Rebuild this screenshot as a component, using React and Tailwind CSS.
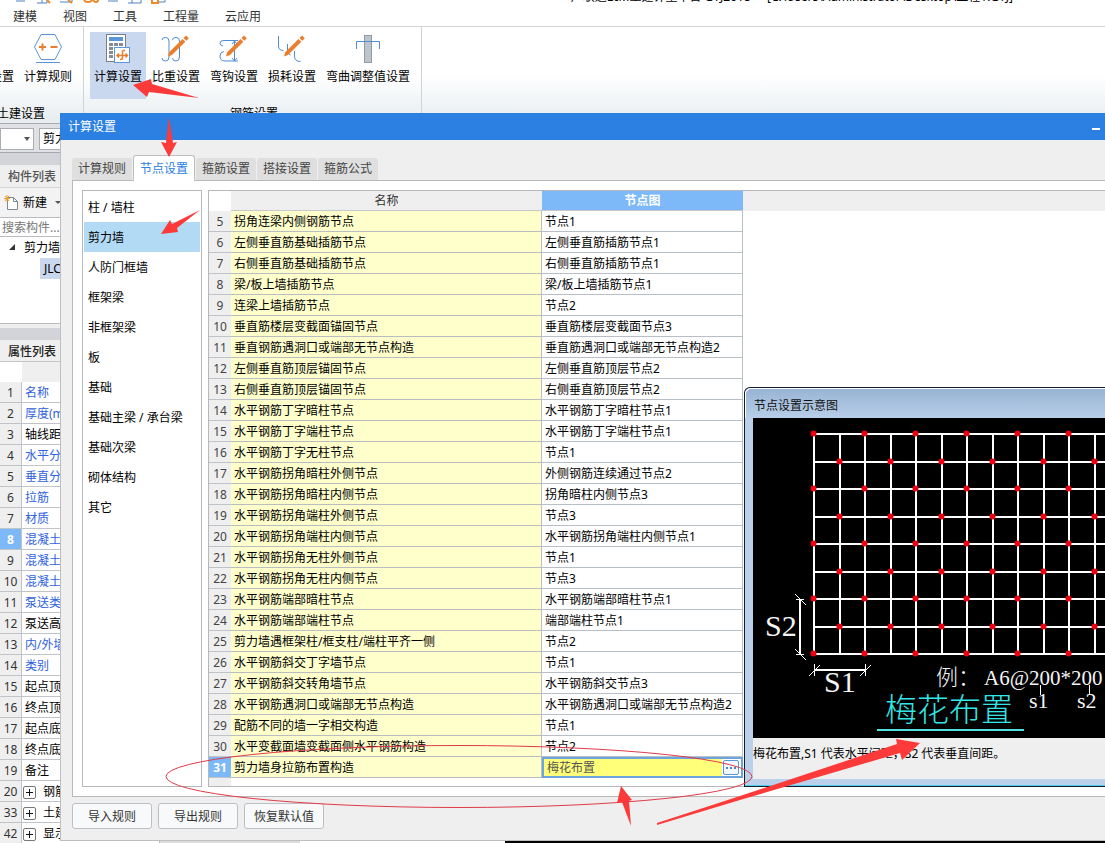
import { useState } from 'react';

const menus = ['建模', '视图', '工具', '工程量', '云应用'];

const tabs = ['计算规则', '节点设置', '箍筋设置', '搭接设置', '箍筋公式'];

const components = [
  '柱 / 墙柱', '剪力墙', '人防门框墙', '框架梁', '非框架梁', '板',
  '基础', '基础主梁 / 承台梁', '基础次梁', '砌体结构', '其它',
];

const properties = [
  { no: 1, name: '名称', link: true },
  { no: 2, name: '厚度(mm)', link: true },
  { no: 3, name: '轴线距' },
  { no: 4, name: '水平分', link: true },
  { no: 5, name: '垂直分', link: true },
  { no: 6, name: '拉筋', link: true },
  { no: 7, name: '材质', link: true },
  { no: 8, name: '混凝土', link: true, active: true },
  { no: 9, name: '混凝土', link: true },
  { no: 10, name: '混凝土', link: true },
  { no: 11, name: '泵送类', link: true },
  { no: 12, name: '泵送高' },
  { no: 13, name: '内/外墙', link: true },
  { no: 14, name: '类别', link: true },
  { no: 15, name: '起点顶' },
  { no: 16, name: '终点顶' },
  { no: 17, name: '起点底' },
  { no: 18, name: '终点底' },
  { no: 19, name: '备注' },
  { no: 20, name: '钢筋', group: true },
  { no: 33, name: '土建', group: true },
  { no: 42, name: '显示', group: true },
];

const nodes = [
  ['拐角连梁内侧钢筋节点', '节点1'],
  ['左侧垂直筋基础插筋节点', '左侧垂直筋插筋节点1'],
  ['右侧垂直筋基础插筋节点', '右侧垂直筋插筋节点1'],
  ['梁/板上墙插筋节点', '梁/板上墙插筋节点1'],
  ['连梁上墙插筋节点', '节点2'],
  ['垂直筋楼层变截面锚固节点', '垂直筋楼层变截面节点3'],
  ['垂直钢筋遇洞口或端部无节点构造', '垂直筋遇洞口或端部无节点构造2'],
  ['左侧垂直筋顶层锚固节点', '左侧垂直筋顶层节点2'],
  ['右侧垂直筋顶层锚固节点', '右侧垂直筋顶层节点2'],
  ['水平钢筋丁字暗柱节点', '水平钢筋丁字暗柱节点1'],
  ['水平钢筋丁字端柱节点', '水平钢筋丁字端柱节点1'],
  ['水平钢筋丁字无柱节点', '节点1'],
  ['水平钢筋拐角暗柱外侧节点', '外侧钢筋连续通过节点2'],
  ['水平钢筋拐角暗柱内侧节点', '拐角暗柱内侧节点3'],
  ['水平钢筋拐角端柱外侧节点', '节点3'],
  ['水平钢筋拐角端柱内侧节点', '水平钢筋拐角端柱内侧节点1'],
  ['水平钢筋拐角无柱外侧节点', '节点1'],
  ['水平钢筋拐角无柱内侧节点', '节点3'],
  ['水平钢筋端部暗柱节点', '水平钢筋端部暗柱节点1'],
  ['水平钢筋端部端柱节点', '端部端柱节点1'],
  ['剪力墙遇框架柱/框支柱/端柱平齐一侧', '节点2'],
  ['水平钢筋斜交丁字墙节点', '节点1'],
  ['水平钢筋斜交转角墙节点', '水平钢筋斜交节点3'],
  ['水平钢筋遇洞口或端部无节点构造', '水平钢筋遇洞口或端部无节点构造2'],
  ['配筋不同的墙一字相交构造', '节点1'],
  ['水平变截面墙变截面侧水平钢筋构造', '节点2'],
  ['剪力墙身拉筋布置构造', '梅花布置'],
];

function Pencil() {
  return (
    <g fill="#ea7e2c">
      <path d="M7 23.500l1.200-4.200L21.500 6l2.800 2.800L11 22z" />
      <path d="M22.500 5l2.500-2.500 2.800 2.800-2.500 2.500z" />
    </g>
  );
}

function RulesIcon() {
  return (
    <svg className="h-[30px] w-[30px]" viewBox="0 0 30 30" fill="none">
      <path d="M8 1.500h14l6.500 12.500-6.500 12.500H8L1.500 14z" stroke="#5b97d6" />
      <path d="M3 29.500h24" stroke="#5b97d6" />
      <path d="M6 14h7M9.500 10.500v7M17.500 14h7" stroke="#ea7e2c" strokeWidth="2" />
    </svg>
  );
}

function CalcIcon() {
  return (
    <svg className="h-[30px] w-[30px]" viewBox="0 0 30 30" fill="none">
      <rect x="3.500" y="1.500" width="19" height="27" fill="#fff" stroke="#777f88" />
      <rect x="6" y="4" width="14" height="4" fill="#5b97d6" />
      <path d="M6 11.500h14M6 15.500h14M6 19.500h14M6 23.500h14" stroke="#858c94" strokeWidth="3" strokeDasharray="4 1" />
      <rect x="11.500" y="14.500" width="15" height="15" fill="#fff" stroke="#5b97d6" />
      <path d="M14 22.500h10.500M19.500 17.500v7.500q0 1.500-2.500 1.500M22 17.500h-2.500M16 20.500l-2 2 2 2M22.500 20.500l2 2-2 2" stroke="#ea7e2c" strokeWidth="1.500" />
    </svg>
  );
}

function WeightIcon() {
  return (
    <svg className="h-[30px] w-[30px]" viewBox="0 0 30 30" fill="none">
      <path d="M1 7q0-2.500 3.500-2.500Q8 4.500 8 8v16q0 4-3.500 4Q1 28 1 25M11.500 7q0-2.500 3.500-2.500 3.500 0 3.500 3.500v16q0 4-3.500 4-3.500 0-3.500-3" stroke="#4d8fd1" />
      <Pencil />
    </svg>
  );
}

function HookIcon() {
  return (
    <svg className="h-[30px] w-[30px]" viewBox="0 0 30 30" fill="none">
      <path d="M4 13q-3-.5-3-3 0-2.500 4-2.500h14M5 18.500q-4 .5-4 4.500 0 5 5 5h13M15.500 8v20M13 11l2.500-3 2.500 3M13 25l2.500 3 2.500-3" stroke="#4d8fd1" />
      <Pencil />
    </svg>
  );
}

function LossIcon() {
  return (
    <svg className="h-[30px] w-[30px]" viewBox="0 0 30 30" fill="none">
      <path d="M1.500 3v10q0 4.500 5 4.500M10.500 11v7q0 3 3 4M17.500 18v5q0 5.500 6 5.500" stroke="#4d8fd1" />
      <Pencil />
    </svg>
  );
}

function BendIcon() {
  return (
    <svg className="h-[30px] w-[30px]" viewBox="0 0 30 30" fill="none">
      <rect x="11.500" y="2.500" width="7" height="27" fill="#bcc5cb" stroke="#929ba2" />
      <path d="M3.500 16V8.500h23V16" stroke="#4d8fd1" />
    </svg>
  );
}

const ribbonTools = [
  { label: '计算设置', icon: <CalcIcon />, active: true },
  { label: '比重设置', icon: <WeightIcon /> },
  { label: '弯钩设置', icon: <HookIcon /> },
  { label: '损耗设置', icon: <LossIcon /> },
  { label: '弯曲调整值设置', icon: <BendIcon /> },
];

function RibbonButton({ label, icon, active }) {
  return (
    <button
      type="button"
      className={`flex h-[67px] shrink-0 flex-col items-center gap-1 px-1 pt-px whitespace-nowrap ${active ? 'bg-[#c9d8ee]' : ''}`}
    >
      {icon}
      <span className="leading-5">{label}</span>
    </button>
  );
}

function Ribbon() {
  return (
    <header>
      <div className="flex h-1 items-end justify-between overflow-hidden">
        <svg className="ml-4 h-1 w-[152px]" viewBox="0 0 152 4" fill="none">
          <path d="M0 1h9M21 3h10V0M26 0v3M44 2h12V0M92 1h10M112 3h13V0M116 0v3M143 2h6V0" stroke="#4d83c4" />
          <path d="M31 0l3 3M52 0l4 3M68 0q1 2 4 2t4-2M77 0q1 2 3 2t2-2M136 0v3h6V0" stroke="#ea8b2c" strokeWidth="2" />
        </svg>
        <span className="mr-[92px] leading-[14px] whitespace-pre">
          {'广联达BIM土建计量平台 GTJ2018  -  [C:\\Users\\Administrator\\Desktop\\工程1.GTJ]'}
        </span>
      </div>
      <nav className="flex h-[23px] items-center gap-[26px] border-b border-[#d5d5d5] pt-1 pl-[13px] text-[#333]">
        {menus.map((menu) => (
          <button key={menu} type="button" className="leading-[18px]">{menu}</button>
        ))}
      </nav>
      <div className="flex h-[97px] border-b border-[#a9adb3] bg-linear-to-b from-white from-50% to-[#e6ecef]">
        <div className="flex w-[84px] flex-col overflow-hidden border-r border-[#d0d3d6] pt-[5px]">
          <div className="flex justify-end gap-0.5 pr-[7px]">
            <RibbonButton
              label="计算设置"
              icon={
                <svg className="h-[30px] w-[30px]" viewBox="0 0 30 30" fill="none">
                  <path d="M12 15h11.500v14H12" stroke="#5b97d6" fill="#eef4fb" />
                </svg>
              }
            />
            <RibbonButton label="计算规则" icon={<RulesIcon />} />
          </div>
          <div className="flex justify-end pt-[5px] pr-[38px] leading-5 whitespace-nowrap">土建设置</div>
        </div>
        <div className="border-r border-[#d0d3d6] pt-[5px] pr-[7px] pl-1.5">
          <div className="flex gap-0.5">
            {ribbonTools.map((tool) => (
              <RibbonButton key={tool.label} {...tool} />
            ))}
          </div>
          <div className="pt-[5px] pl-1 text-center leading-5">钢筋设置</div>
        </div>
      </div>
    </header>
  );
}

function Sidebar() {
  return (
    <aside className="w-40 border-r border-[#b5b8bd] bg-white">
      <div className="flex h-[29px] items-center gap-[5px] border-b border-[#a5a8ad] bg-[#dfe1e5] pt-px">
        <div className="relative w-[34px]">
          <select aria-label="楼层" className="block h-[22px] w-full appearance-none border border-[#aaadb2] bg-white" />
          <span className="pointer-events-none absolute top-[9px] right-1 border-x-[3px] border-t-4 border-x-transparent border-t-[#555]" />
        </div>
        <select aria-label="构件类型" className="h-[22px] w-28 appearance-none border border-[#aaadb2] bg-white pl-[3px]">
          <option>剪力墙</option>
        </select>
      </div>
      <div className="h-3 bg-[#d3d4da]" />
      <h2 className="h-[23px] border-b border-[#d5d5d5] bg-[#efefef] pl-2 leading-[23px] font-medium text-[#555]">构件列表</h2>
      <div className="flex h-[29px] items-center bg-[#f3f3f3] pl-1">
        <button type="button" className="flex items-center">
          <svg className="mr-[5px] h-4 w-[14px]" viewBox="0 0 14 16" fill="none">
            <path d="M3.500 2.500h6l4 4v8h-10z" fill="#fff" stroke="#7a8794" />
            <path d="M9.500 2.500v4h4" stroke="#7a8794" />
            <path d="M3 0v7M0 3.500h6M1 1l4 5M5 1L1 6" stroke="#f0a030" />
          </svg>
          新建
          <span className="ml-2 border-x-[3px] border-t-[3px] border-x-transparent border-t-[#555]" />
        </button>
      </div>
      <input
        aria-label="搜索构件"
        placeholder="搜索构件..."
        className="block h-5 w-full border-y border-[#b9bcc0] pl-0.5 placeholder:text-[#777]"
      />
      <div className="h-[87px] border-b border-[#b9bcc0]">
        <div className="flex h-[21px] items-center gap-2 pl-[9px]">
          <svg className="h-[7px] w-[7px]" viewBox="0 0 7 7">
            <path d="M6 0v6H0z" fill="#333" />
          </svg>
          剪力墙
        </div>
        <div className="ml-10 h-[21px] bg-[#c9d8ee] pl-1 leading-[21px]">JLC</div>
      </div>
      <div className="h-1 bg-[#efefef]" />
      <div className="h-3 bg-[#d3d4da]" />
      <h2 className="h-[22px] border-b border-[#c5c5c5] bg-[#efefef] pl-2 leading-[23px] font-medium text-[#222]">属性列表</h2>
      <table className="w-full table-fixed border-separate border-spacing-0">
        <colgroup>
          <col className="w-[22px]" />
          <col />
        </colgroup>
        <thead>
          <tr className="h-5">
            <td />
            <td className="bg-[#efefef]" />
          </tr>
        </thead>
        <tbody>
          {properties.map((row) => (
            <tr key={row.no} className="h-[21px]">
              <th
                className={`border-r border-b border-[#c0c4c8] px-0 pt-0.5 pb-0 leading-[18px] ${
                  row.active ? 'bg-[#7db8f8] font-bold text-white' : 'bg-[#efefef] font-normal text-[#333]'
                }`}
              >
                {row.no}
              </th>
              <td
                className={`border-b border-[#c0c4c8] pt-0.5 pr-0 pb-0 leading-[18px] whitespace-nowrap ${
                  row.group ? 'pl-px' : 'pl-[3px]'
                } ${row.link ? 'text-[#2f62e0]' : ''}`}
              >
                {row.group ? (
                  <span className="flex items-center gap-[7px]">
                    <button type="button" aria-label="展开" className="flex size-[13px] items-center justify-center rounded-[2px] border border-[#777]">
                      <svg className="size-[9px]" viewBox="0 0 9 9">
                        <path d="M1 4.500h7M4.500 1v7" stroke="#111" />
                      </svg>
                    </button>
                    {row.name}
                  </span>
                ) : (
                  row.name
                )}
              </td>
            </tr>
          ))}
        </tbody>
      </table>
    </aside>
  );
}

function NodeTable() {
  return (
    <div className="min-w-0 flex-1 border-y border-l border-[#b4b8bc]">
      <table className="w-full table-fixed border-separate border-spacing-0">
        <colgroup>
          <col className="w-[22px]" />
          <col className="w-[311px]" />
          <col className="w-[201px]" />
          <col />
        </colgroup>
        <thead>
          <tr className="h-5">
            <td />
            <th className="border-b border-[#c5c9cd] bg-[#efefef] p-0 pt-px leading-[18px] font-normal text-[#333]">名称</th>
            <th className="border-b border-[#c5c9cd] bg-[#7db8f8] p-0 pt-px leading-[18px] font-bold text-white">节点图</th>
            <td className="bg-[#efefef]" />
          </tr>
        </thead>
        <tbody>
          {nodes.map(([name, node], i) => {
            const active = i === nodes.length - 1;
            return (
              <tr key={name} className="h-[21px]">
                <th
                  className={`border-b border-[#c0c4c8] px-0 pt-0.5 pb-0 leading-[18px] ${
                    active ? 'bg-[#7db8f8] font-bold text-white' : 'bg-[#efefef] font-normal text-[#444]'
                  }`}
                >
                  {i + 5}
                </th>
                <td className="border-r border-b border-[#b9bfc0] bg-[#ffffcc] pt-0.5 pr-0 pb-0 pl-[3px] leading-[18px]">{name}</td>
                {active ? (
                  <td className="border-2 border-[#6ea4dc] bg-[#ffff7a] p-0 leading-[17px] text-[#555]">
                    <div className="flex items-center justify-between pl-[3px]">
                      {node}
                      <span className="flex h-[17px] bg-white pl-px">
                        <button
                          type="button"
                          aria-label="更多"
                          className="mr-0.5 flex h-[15px] w-4 items-center justify-center self-center rounded-[2px] border border-[#5b97d6] bg-[#f3f8ff]"
                        >
                          <svg className="h-0.5 w-[10px]" viewBox="0 0 10 2">
                            <path d="M0 1h10" stroke="#4a86cc" strokeWidth="2" strokeDasharray="2" />
                          </svg>
                        </button>
                      </span>
                    </div>
                  </td>
                ) : (
                  <td className="border-r border-b border-[#b9bfc8] pt-0.5 pr-0 pb-0 pl-[3px] leading-[18px]">{node}</td>
                )}
                <td />
              </tr>
            );
          })}
        </tbody>
      </table>
      <div className="h-2 w-[22px] bg-[#efefef]" />
    </div>
  );
}

// Wall grid with tie bars on alternating crossings
const gridX = Array.from({ length: 40 }, (_, i) => 61 + Math.ceil(i * 25.5));
const gridY = [16, 44, 71, 99, 126, 154, 181, 209, 236];

function NodeDiagram() {
  return (
    <svg className="block h-80 w-full bg-black font-['Liberation_Serif','Noto_Sans_CJK_SC',serif]">
      <g stroke="#fff" strokeWidth="2">
        {gridX.map((x) => (
          <line key={x} x1={x} y1="16" x2={x} y2="236" />
        ))}
        {gridY.map((y) => (
          <line key={y} x1="61" y1={y} x2="100%" y2={y} />
        ))}
      </g>
      <g fill="#ee0010">
        {gridY.map((y, row) =>
          gridX
            .filter((_, col) => col % 2 === row % 2)
            .map((x) => <circle key={`${x}-${y}`} cx={x - 0.5} cy={y - 0.5} r="3" />)
        )}
      </g>
      <g stroke="#fff" fill="none">
        <path d="M47 181v56M61 252h52" strokeWidth="2" />
        <path d="M43 181.500h8M43 236.500h8M61.500 246v12M112.500 246v12M42 176l11 11M42 231l11 11M56 258l11-11M107 258l11-11" />
        <path d="M287.500 267v10M336.500 267v10" />
      </g>
      <g fill="#f4f4f4" className="font-light">
        <text x="12" y="218" fontSize="30">S2</text>
        <text x="71" y="274" fontSize="30">S1</text>
        <text x="183" y="267" fontSize="22">例：</text>
        <text x="231" y="267" fontSize="21">A6@200*200</text>
        <text x="276" y="290" fontSize="22">s1</text>
        <text x="324" y="290" fontSize="22">s2</text>
      </g>
      <text x="132" y="303" fontSize="32" fill="#35e6e6" className="font-light">梅花布置</text>
      <path d="M124 312h147" stroke="#4fe0e0" strokeWidth="2" />
    </svg>
  );
}

function DiagramWindow() {
  return (
    <section className="absolute top-[274px] right-0 left-[683px] rounded-tl-md border-t border-b border-l border-[#141c28] bg-[#bbd0ea]">
      <div className="border-b border-b-[#4fd0ee] pb-1.5 pl-2">
        <h2 className="-ml-2 h-[30px] rounded-tl-md border-t border-l border-white bg-linear-to-b from-[#98b4d3] to-[#b8cee9] pt-1 pl-2 leading-[26px] text-[#111]">
          节点设置示意图
        </h2>
        <NodeDiagram />
        <p className="h-[41px] bg-[#efefef] leading-[32px]">梅花布置,S1 代表水平间距，S2 代表垂直间距。</p>
      </div>
    </section>
  );
}

function SettingsDialog() {
  const [tab, setTab] = useState('节点设置');
  const [component, setComponent] = useState('剪力墙');

  return (
    <section className="absolute top-[113px] right-0 left-[60px] border-b border-l border-[#bfbfbf] bg-[#efefef]">
      <div className="-ml-px flex h-[27px] items-center justify-between bg-[#2b80e2] pl-2 text-white">
        <h1>计算设置</h1>
        <button type="button" aria-label="最小化" className="flex h-full w-[13px] items-center pt-1">
          <span className="h-0.5 w-2 bg-white" />
        </button>
      </div>
      <div role="tablist" className="flex items-end gap-px pt-[15px] pl-[11px]">
        {tabs.map((name) => (
          <button
            key={name}
            type="button"
            role="tab"
            aria-selected={tab === name}
            onClick={() => setTab(name)}
            className={
              tab === name
                ? 'relative -mb-px h-[26px] rounded-t-[3px] border border-b-0 border-[#bfbfbf] bg-white px-1.5 text-[#2b80e2]'
                : 'h-[22px] rounded-t-[3px] bg-[#dfdfdf] px-1.5 text-[#444]'
            }
          >
            {name}
          </button>
        ))}
      </div>
      <div className="ml-[11px] flex gap-1.5 border-y border-l border-[#b9b9b9] bg-white py-[9px] pl-[9px]">
        <div className="w-[120px] shrink-0 border border-[#b4b8bc] p-px">
          {components.map((name) => (
            <button
              key={name}
              type="button"
              onClick={() => setComponent(name)}
              className={`block h-[30px] w-full pt-0.5 pl-1 text-left ${component === name ? 'bg-[#b3daf5]' : ''}`}
            >
              {name}
            </button>
          ))}
        </div>
        <NodeTable />
      </div>
      <div className="flex gap-1.5 pt-1.5 pb-[11px] pl-[11px]">
        {['导入规则', '导出规则', '恢复默认值'].map((name) => (
          <button key={name} type="button" className="h-[26px] w-20 rounded-[3px] border border-[#bcbfc4] bg-[#f8f9fb] pt-0.5 text-[#333]">
            {name}
          </button>
        ))}
      </div>
      <DiagramWindow />
    </section>
  );
}

function Annotations() {
  return (
    <svg className="pointer-events-none absolute inset-0 h-full w-full" fill="#fc3a3a">
      <path d="M133 85L151 79L152 84L199 98L149 92L147 97Z" />
      <path d="M169 117L173 143L177 142L169 157L161 142L166 143Z" />
      <path d="M200 210L177 228L178 232L161 234L170 220L172 224Z" />
      <path d="M621 786L632 800L629 801L631 826L622 802L617 803Z" />
      <path d="M657 823L740 796L897 744L896 739L920 743L902 760L900 753L740 800L657 825Z" />
      <ellipse cx="459" cy="776.500" rx="293" ry="31" fill="none" stroke="#e03a48" />
    </svg>
  );
}

export default function App() {
  return (
    <div className="relative h-screen overflow-hidden bg-white font-['Noto_Sans','Noto_Sans_CJK_SC',sans-serif] text-xs text-black">
      <Ribbon />
      <div className="flex">
        <Sidebar />
        <div className="w-[140px] bg-[#dcdcdc]" />
        <div className="w-[205px]" />
        <div className="flex-1 bg-black" />
      </div>
      <SettingsDialog />
      <Annotations />
    </div>
  );
}
